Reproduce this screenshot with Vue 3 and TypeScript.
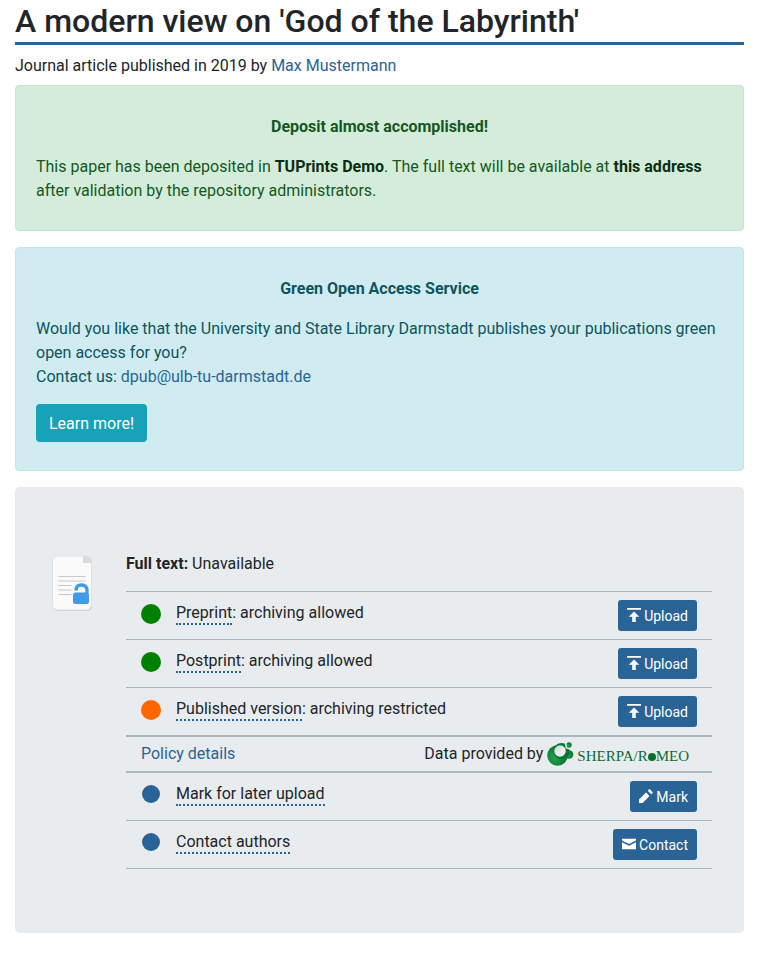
<script setup lang="ts">
type Icon = 'upload' | 'pencil' | 'envelope'

interface Row {
  term: string
  note: string
  tone: 'green' | 'orange' | 'blue'
  action: string
  icon: Icon
}

const iconPaths: Record<Icon, string> = {
  upload: 'M0 0v1h8v-1h-8zm4 2l-3 3h2v3h2v-3h2l-3-3z',
  pencil: 'M6 0l-1 1 2 2 1-1-2-2zm-2 2l-4 4v2h2l4-4-2-2z',
  envelope: 'M0 1v1l4 2 4-2v-1h-8zm0 2v4h8v-4l-4 2-4-2z',
}

const versions: Row[] = [
  { term: 'Preprint', note: ': archiving allowed', tone: 'green', action: 'Upload', icon: 'upload' },
  { term: 'Postprint', note: ': archiving allowed', tone: 'green', action: 'Upload', icon: 'upload' },
  { term: 'Published version', note: ': archiving restricted', tone: 'orange', action: 'Upload', icon: 'upload' },
]

const tasks: Row[] = [
  { term: 'Mark for later upload', note: '', tone: 'blue', action: 'Mark', icon: 'pencil' },
  { term: 'Contact authors', note: '', tone: 'blue', action: 'Contact', icon: 'envelope' },
]

const groups = [
  { name: 'versions', rows: versions },
  { name: 'tasks', rows: tasks },
]
</script>

<template>
  <main class="page">
    <h1 class="title">A modern view on 'God of the Labyrinth'</h1>
    <p class="byline">Journal article published in 2019 by <a href="#author">Max Mustermann</a></p>

    <section class="alert success">
      <p class="heading">Deposit almost accomplished!</p>
      <p>
        This paper has been deposited in <a class="strong-link" href="#repository">TUPrints Demo</a>. The full text will
        be available at <a class="strong-link" href="#address">this address</a> after validation by the repository
        administrators.
      </p>
    </section>

    <section class="alert info">
      <p class="heading">Green Open Access Service</p>
      <p class="offer">
        Would you like that the University and State Library Darmstadt publishes your publications green open access for
        you?<br />
        Contact us: <a href="#contact">dpub@ulb-tu-darmstadt.de</a>
      </p>
      <button class="learn" type="button">Learn more!</button>
    </section>

    <section class="panel">
      <svg class="document" viewBox="0 0 42 58" aria-hidden="true">
        <path d="M6 2h26l9 8v41a5 5 0 0 1-5 5h-29a5 5 0 0 1-5-5v-44a5 5 0 0 1 4-5z" fill="#c4c7ca" />
        <path d="M6 1h26l8.500 7v42a5 5 0 0 1-5 5h-29a5 5 0 0 1-5-5v-44a5 5 0 0 1 4.500-5z" fill="#fafafa" stroke="#dfe2e4" />
        <path d="M32 1h4a5 5 0 0 1 5 5v2h-9z" fill="#d9dbdc" />
        <path d="M7.500 21.500h27M7.500 26h27M7.500 30.500h13M7.500 35h13M7.500 39.500h13" stroke="#c8c8c8" fill="none" />
        <path d="M25.300 35.500q-.8-5.500 5.200-5.500t5.500 6.500q-.2 1.500-1.500 3" fill="none" stroke="#429aea" stroke-width="3.500" />
        <path d="M30 33.500a3 3 0 0 1 2 4.500h-3z" fill="#fafafa" />
        <rect x="22" y="37.500" width="16" height="11.500" rx="2.500" fill="#429aea" />
      </svg>

      <div class="details">
        <p class="status"><strong>Full text:</strong> Unavailable</p>
        <table class="options">
          <tbody v-for="group in groups" :key="group.name">
            <tr v-for="row in group.rows" :key="row.term">
              <td class="mark">
                <svg class="dot" :class="row.tone" viewBox="0 0 20 20" aria-hidden="true">
                  <circle cx="10" :cy="row.tone === 'blue' ? 9 : 10" :r="row.tone === 'blue' ? 9 : 10" />
                </svg>
              </td>
              <td class="label"><span class="term">{{ row.term }}</span>{{ row.note }}</td>
              <td class="action">
                <button type="button">
                  <svg viewBox="0 0 8 8" aria-hidden="true"><path :d="iconPaths[row.icon]" /></svg>
                  {{ row.action }}
                </button>
              </td>
            </tr>
            <tr v-if="group.name === 'versions'" class="policy">
              <td colspan="3">
                <div class="policy-line">
                  <a href="#policy">Policy details</a>
                  <span class="provider">
                    Data provided by
                    <a class="sherpa" href="#sherpa">
                      <svg class="globe" viewBox="0 0 27 24" aria-hidden="true">
                        <defs>
                          <radialGradient id="sphere" cx="0.35" cy="0.6" r="0.7">
                            <stop offset="0" stop-color="#22a04e" />
                            <stop offset="1" stop-color="#05702c" />
                          </radialGradient>
                          <linearGradient id="hollow" x2="1" y2="1">
                            <stop offset="0" stop-color="#a9d3b6" />
                            <stop offset="0.5" stop-color="#e9ecef" />
                          </linearGradient>
                        </defs>
                        <circle cx="22" cy="12.500" r="4.300" fill="url(#sphere)" />
                        <circle cx="10.500" cy="13.500" r="10.300" fill="url(#sphere)" />
                        <circle cx="14.500" cy="9" r="8" fill="#087331" />
                        <circle cx="13" cy="9" r="5.800" fill="url(#hollow)" />
                        <circle cx="22" cy="3" r="2.700" fill="url(#sphere)" />
                        <path d="M18.500 1.500l1 4.500 4 1" fill="none" stroke="#e9ecef" stroke-width="1.500" />
                      </svg>
                      <span class="wordmark">SHERPA/R<i class="bead"></i>MEO</span>
                    </a>
                  </span>
                </div>
              </td>
            </tr>
          </tbody>
        </table>
      </div>
    </section>
  </main>
</template>

<style>
body {
  background: #fff;
}
</style>

<style scoped>
.page {
  box-sizing: border-box;
  padding: 2px 14px 31px 15px;
  font-family: Roboto, "Liberation Sans", sans-serif;
  font-size: 16px;
  line-height: 24px;
  color: #212529;
}

a {
  color: #2a6496;
  text-decoration: none;
}

p {
  margin: 0 0 16px;
}

button {
  border: 1px solid transparent;
  color: #fff;
  font-family: inherit;
  cursor: pointer;
}

.title {
  margin: 0 0 9px;
  padding-bottom: 2px;
  border-bottom: 3px solid #2a6496;
  font-size: 32px;
  font-weight: 500;
  line-height: 38px;
}

.byline {
  margin-bottom: 7px;
}

.alert {
  margin-bottom: 16px;
  padding: 29px 20px 27px;
  border: 1px solid;
  border-radius: 4px;
}

.info {
  padding-bottom: 28px;
}

.alert > :last-child {
  margin-bottom: 0;
}

.heading {
  font-weight: 700;
  text-align: center;
}

.success {
  background: #d4edda;
  border-color: #c3e6cb;
  color: #155724;
}

.info {
  background: #d1ecf1;
  border-color: #bee5eb;
  color: #0c5460;
}

.offer {
  margin-bottom: 15px;
}

.strong-link {
  color: #0b2e13;
  font-weight: 700;
}

.learn {
  display: block;
  padding: 7px 12px 5px;
  border-radius: 4px;
  background: #17a2b8;
  font-size: 16px;
  line-height: 24px;
}

.panel {
  display: flex;
  align-items: flex-start;
  gap: 33px;
  padding: 65px 32px 64px 36px;
  border-radius: 5px;
  background: #e9ecef;
}

.document {
  flex: none;
  width: 42px;
  height: 58px;
  margin-top: 3px;
}

.details {
  flex: 1;
}

.status {
  margin-bottom: 15px;
}

.options {
  width: 100%;
  border-collapse: separate;
  border-spacing: 0;
  border-bottom: 1px solid #adb5bd;
}

td {
  padding: 8px 0;
  border-top: 1px solid #adb5bd;
  vertical-align: top;
}

tbody + tbody tr:first-child td {
  border-top-width: 2px;
}

.mark {
  width: 35px;
  padding-left: 15px;
}

.dot {
  display: block;
  width: 20px;
  height: 20px;
  margin-top: 4px;
}

.green {
  fill: #008000;
}

.orange {
  fill: #ff6600;
}

.blue {
  fill: #2a6496;
}

.label {
  padding-top: 9px;
}

.term {
  padding-bottom: 1px;
  border-bottom: 2px dotted #2a6496;
}

.action {
  padding-right: 15px;
  text-align: right;
}

.action button {
  padding: 5px 8px 3px;
  border-radius: 3px;
  background: #2a6496;
  font-size: 14px;
  line-height: 21px;
  vertical-align: top;
}

.action svg {
  width: 14px;
  height: 14px;
  fill: currentColor;
  vertical-align: -1px;
}

.policy td {
  padding: 5px 15px;
  border-top-width: 2px;
}

.policy-line,
.provider,
.sherpa {
  display: flex;
  align-items: center;
}

.policy-line {
  justify-content: space-between;
}

.provider {
  gap: 4px;
  padding-right: 8px;
}

.sherpa {
  gap: 3px;
  color: #0a6b30;
}

.globe {
  width: 27px;
  height: 24px;
}

.wordmark {
  padding-top: 4px;
  font-family: "Liberation Serif", serif;
  font-size: 15px;
  line-height: 20px;
}

.bead {
  display: inline-block;
  width: 8px;
  height: 8px;
  border-radius: 50%;
  background: #05702c;
}
</style>
